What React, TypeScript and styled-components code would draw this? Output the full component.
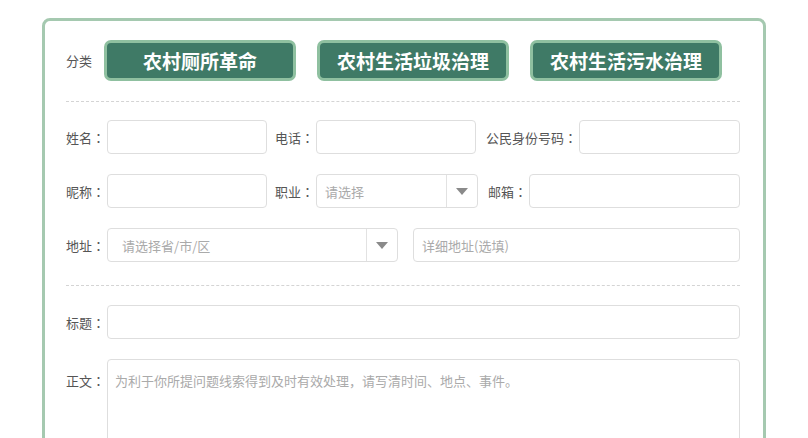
import React from "react";
import styled, { createGlobalStyle } from "styled-components";

const GlobalStyle = createGlobalStyle`
  html, body {
    margin: 0;
    padding: 0;
    background: #ffffff;
  }
  body {
    font-family: "Liberation Sans", "Noto Sans CJK SC", sans-serif;
    color: #555;
  }
`;

const Page = styled.div`
  padding: 18px 0 0 42px;
`;

const Card = styled.div`
  width: 724px;
  box-sizing: border-box;
  border: 3px solid #a5c9b0;
  border-radius: 8px;
  padding: 19px 23px 40px 21px;
  background: #fff;
`;

const CategoryRow = styled.div`
  display: flex;
  align-items: center;
  gap: 21px;
`;

const CategoryLabel = styled.span`
  font-size: 13px;
  color: #555;
  margin-right: -9px;
  font-family: "Noto Sans CJK SC", sans-serif;
`;

const CategoryButton = styled.button`
  width: 192px;
  height: 41px;
  box-sizing: border-box;
  border: 3px solid #8fc0a0;
  border-radius: 7px;
  background: #3f7a66;
  color: #fff;
  font-family: "Noto Sans CJK SC", sans-serif;
  font-size: 19px;
  font-weight: 700;
  cursor: pointer;
  padding: 0;
`;

const Divider = styled.div<{ $top: number; $bottom: number }>`
  border-top: 1px dashed #d4d4d4;
  margin: ${(p) => p.$top}px 0 ${(p) => p.$bottom}px;
`;

const Rows = styled.div`
  display: flex;
  flex-direction: column;
  gap: 20px;
`;

const Row = styled.div`
  display: flex;
  align-items: center;
`;

const Field = styled.div<{ $gap?: number }>`
  display: flex;
  align-items: center;
  margin-right: ${(p) => p.$gap ?? 10}px;
  &:last-child {
    margin-right: 0;
  }
`;

const Label = styled.label<{ $top?: boolean }>`
  font-size: 13px;
  color: #555;
  white-space: nowrap;
  margin-right: 2px;
  align-self: ${(p) => (p.$top ? "flex-start" : "center")};
  padding-top: ${(p) => (p.$top ? "12px" : "0")};
  font-family: "Noto Sans CJK SC", sans-serif;
`;

const Colon = styled.span`
  font-family: "Noto Sans CJK JP", sans-serif;
`;

const TextInput = styled.input<{ $w: number; $pad?: number }>`
  width: ${(p) => p.$w}px;
  height: 34px;
  box-sizing: border-box;
  border: 1px solid #dedede;
  border-radius: 4px;
  padding: 0 ${(p) => p.$pad ?? 8}px;
  font-size: 13px;
  font-family: "Noto Sans CJK SC", sans-serif;
  color: #555;
  outline: none;
  &::placeholder {
    color: #aaa;
  }
`;

const SelectBox = styled.div<{ $w: number }>`
  width: ${(p) => p.$w}px;
  height: 34px;
  box-sizing: border-box;
  border: 1px solid #dedede;
  border-radius: 4px;
  display: flex;
  align-items: stretch;
`;

const SelectText = styled.span<{ $pad?: number }>`
  flex: 1;
  display: flex;
  align-items: center;
  padding-left: ${(p) => p.$pad ?? 8}px;
  font-size: 13px;
  color: #aaa;
  font-family: "Noto Sans CJK SC", sans-serif;
`;

const Arrow = styled.span`
  width: 30px;
  border-left: 1px solid #e2e2e2;
  display: flex;
  align-items: center;
  justify-content: center;
  &::after {
    content: "";
    border-left: 6px solid transparent;
    border-right: 6px solid transparent;
    border-top: 7px solid #8a8a8a;
    margin-top: 1px;
  }
`;

const TextArea = styled.textarea`
  flex: 1;
  height: 130px;
  box-sizing: border-box;
  border: 1px solid #dedede;
  border-radius: 4px;
  padding: 11px 7px;
  font-size: 13px;
  font-family: "Noto Sans CJK SC", sans-serif;
  resize: none;
  outline: none;
  &::placeholder {
    color: #aaa;
  }
`;

const WideField = styled(Field)`
  flex: 1;
  & > input {
    flex: 1;
  }
`;

const FieldLabel = ({ text, top }: { text: string; top?: boolean }) => (
  <Label $top={top}>
    {text}
    <Colon>：</Colon>
  </Label>
);

const Select = ({ w, text, pad }: { w: number; text: string; pad?: number }) => (
  <SelectBox $w={w}>
    <SelectText $pad={pad}>{text}</SelectText>
    <Arrow />
  </SelectBox>
);

const categories = ["农村厕所革命", "农村生活垃圾治理", "农村生活污水治理"];

export default function App() {
  return (
    <>
      <GlobalStyle />
      <Page>
        <Card>
          <CategoryRow>
            <CategoryLabel>分类</CategoryLabel>
            {categories.map((c) => (
              <CategoryButton key={c}>{c}</CategoryButton>
            ))}
          </CategoryRow>

          <Divider $top={20} $bottom={18} />

          <Rows>
            <Row>
              <Field $gap={8}>
                <FieldLabel text="姓名" />
                <TextInput $w={160} />
              </Field>
              <Field $gap={10}>
                <FieldLabel text="电话" />
                <TextInput $w={160} />
              </Field>
              <Field>
                <FieldLabel text="公民身份号码" />
                <TextInput $w={161} />
              </Field>
            </Row>
            <Row>
              <Field $gap={8}>
                <FieldLabel text="昵称" />
                <TextInput $w={160} />
              </Field>
              <Field $gap={10}>
                <FieldLabel text="职业" />
                <Select w={162} text="请选择" />
              </Field>
              <Field>
                <FieldLabel text="邮箱" />
                <TextInput $w={211} />
              </Field>
            </Row>
            <Row>
              <Field $gap={15}>
                <FieldLabel text="地址" />
                <Select w={291} text="请选择省/市/区" pad={14} />
              </Field>
              <Field>
                <TextInput $w={327} placeholder="详细地址(选填)" />
              </Field>
            </Row>
          </Rows>

          <Divider $top={23} $bottom={19} />

          <Rows>
            <Row>
              <WideField>
                <FieldLabel text="标题" />
                <TextInput $w={633} />
              </WideField>
            </Row>
            <Row>
              <WideField>
                <FieldLabel text="正文" top />
                <TextArea placeholder="为利于你所提问题线索得到及时有效处理，请写清时间、地点、事件。" />
              </WideField>
            </Row>
          </Rows>
        </Card>
      </Page>
    </>
  );
}
